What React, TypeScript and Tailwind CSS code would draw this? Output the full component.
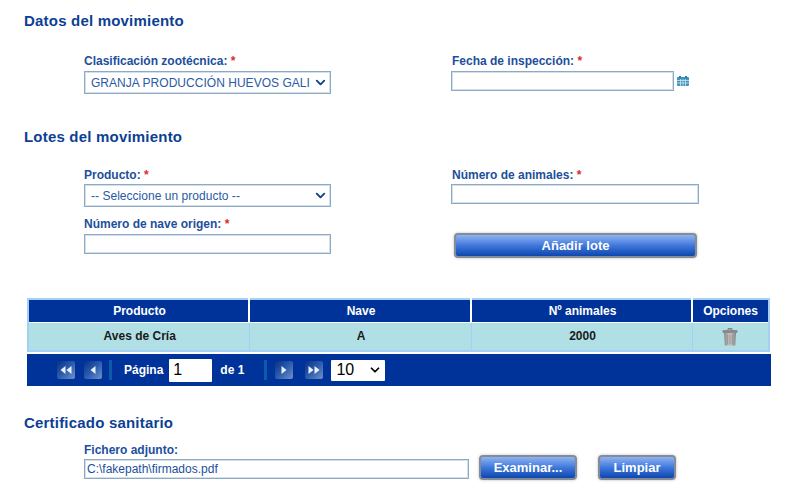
import React from "react";
import { ChevronDown } from "lucide-react";

const titleClass = "text-[15px] leading-[16px] font-bold tracking-[0.2px] text-[#0d3f94]";
const labelClass = "block text-[12px] leading-[14px] font-bold text-[#1c4f9c]";
const inputClass =
  "block h-[20px] border border-[#8ea9c4] shadow-[inset_0_0_0_1px_#d3dfe9] bg-white text-[12px] text-[#1c4f9c] px-1 outline-none";
const buttonClass =
  "rounded-[4px] border-2 border-[#838c98] bg-gradient-to-b from-[#8fb2f0] via-[#3f78dc] to-[#0c46ae] text-white font-bold text-[13px] shadow-[0_0_3px_#bbb]";

const Req = () => <span className="text-[#e0282e]"> *</span>;

const FakeSelect = ({ text }: { text: string }) => (
  <div className="flex h-[23px] w-[247px] items-center justify-between border border-[#8ea9c4] shadow-[inset_0_0_0_1px_#d3dfe9] bg-white pl-[6px] pr-[2px] text-[12px] tracking-[0.03px] text-[#2a5aa3]">
    <span className="whitespace-nowrap">{text}</span>
    <ChevronDown size={15} strokeWidth={3} className="shrink-0 text-[#123f8c]" />
  </div>
);

const CalendarIcon = () => (
  <svg width="12" height="10" viewBox="0 0 12 10" className="ml-[3px] mt-[5px]">
    <rect x="0" y="1" width="12" height="9" rx="1" fill="#3d93bd" />
    <rect x="2" y="0" width="2" height="2" fill="#2f7da3" />
    <rect x="8" y="0" width="2" height="2" fill="#2f7da3" />
    <path d="M0 4.5h12M0 7h12M3.5 3v7M6 3v7M8.5 3v7" stroke="#cfe6f2" strokeWidth="0.8" />
  </svg>
);

const TrashIcon = () => (
  <svg width="16" height="19" viewBox="0 0 16 19" className="mx-auto">
    <defs>
      <linearGradient id="can" x1="0" x2="1" y1="0" y2="0">
        <stop offset="0" stopColor="#8c8c8c" />
        <stop offset="0.5" stopColor="#c4c4c4" />
        <stop offset="1" stopColor="#858585" />
      </linearGradient>
    </defs>
    <path d="M6 1.5h4v1.5H6z" fill="none" stroke="#858585" strokeWidth="1" />
    <rect x="0.5" y="3" width="15" height="3" rx="1" fill="#8a8a8a" />
    <path d="M2 6h12l-.8 12.5H2.8z" fill="url(#can)" />
    <path d="M5.5 8v9M8 8v9M10.5 8v9" stroke="#999" strokeWidth="1" />
  </svg>
);

const PagerButton = ({ dir, double }: { dir: "left" | "right"; double?: boolean }) => {
  const tri = (x: number) =>
    dir === "left" ? `M${x + 5} 2 L${x} 6 L${x + 5} 10 Z` : `M${x} 2 L${x + 5} 6 L${x} 10 Z`;
  return (
    <div className="flex h-[18px] w-[18px] items-center justify-center rounded-[2px] bg-gradient-to-br from-[#0a2f86] via-[#2c5cae] to-[#6f92c8]">
      <svg width="12" height="12" viewBox="0 0 12 12">
        {double ? (
          <>
            <path d={tri(0.5)} fill="#e8f0fb" />
            <path d={tri(6.5)} fill="#e8f0fb" />
          </>
        ) : (
          <path d={tri(3.5)} fill="#e8f0fb" />
        )}
      </svg>
    </div>
  );
};

const Separator = () => <div className="h-[20px] w-[3px] bg-[#0c5aa8]" />;

export default function App() {
  return (
    <div className="h-[500px] w-[793px] overflow-hidden bg-white font-['Liberation_Sans',Arial,sans-serif]">
      <div className="pl-[24px] pt-[13px]">
        <h2 className={titleClass}>Datos del movimiento</h2>
      </div>

      <div className="mt-[25px] flex pl-[84px]">
        <div className="w-[367px]">
          <label className={labelClass}>
            Clasificación zootécnica:<Req />
          </label>
          <div className="mt-[3px]">
            <FakeSelect text="GRANJA PRODUCCIÓN HUEVOS GALI" />
          </div>
        </div>
        <div>
          <label className={`${labelClass} ml-px`}>
            Fecha de inspección:<Req />
          </label>
          <div className="mt-[3px] flex items-start">
            <input className={`${inputClass} w-[223px]`} readOnly />
            <CalendarIcon />
          </div>
        </div>
      </div>

      <div className="mt-[35px] pl-[24px]">
        <h2 className={titleClass}>Lotes del movimiento</h2>
      </div>

      <div className="mt-[23px] flex pl-[84px]">
        <div className="w-[367px]">
          <label className={labelClass}>
            Producto:<Req />
          </label>
          <div className="mt-[2px]">
            <FakeSelect text="-- Seleccione un producto --" />
          </div>
          <label className={`${labelClass} mt-[10px]`}>
            Número de nave origen:<Req />
          </label>
          <input className={`${inputClass} mt-[3px] w-[247px]`} readOnly />
        </div>
        <div>
          <label className={`${labelClass} ml-px`}>
            Número de animales:<Req />
          </label>
          <input className={`${inputClass} mt-[2px] w-[248px]`} readOnly />
          <button className={`${buttonClass} ml-[3px] mt-[29px] block h-[25px] w-[243px]`}>Añadir lote</button>
        </div>
      </div>

      <div className="ml-[27px] mt-[40px] w-[743px]">
        <table className="w-full table-fixed border-collapse border-2 border-[#a5d0f5] text-center text-[12px] font-bold">
          <colgroup>
            <col className="w-[221px]" />
            <col className="w-[222px]" />
            <col className="w-[221px]" />
            <col />
          </colgroup>
          <thead>
            <tr className="h-[23px] bg-[#003399] text-white">
              <th className="border-r-2 border-b border-white pl-[2px] font-bold">Producto</th>
              <th className="border-r-2 border-b border-white pl-[2px] font-bold">Nave</th>
              <th className="border-r-2 border-b border-white pl-[2px] font-bold">Nº animales</th>
              <th className="border-b border-white font-bold">Opciones</th>
            </tr>
          </thead>
          <tbody>
            <tr className="h-[29px] bg-[#b0e0e6] text-[#1a1a1a]">
              <td className="border-r border-[#a5d0f5] pl-[2px]">Aves de Cría</td>
              <td className="border-r border-[#a5d0f5] pl-[2px]">A</td>
              <td className="border-r border-[#a5d0f5] pl-[2px]">2000</td>
              <td>
                <TrashIcon />
              </td>
            </tr>
          </tbody>
        </table>
      </div>

      <div className="ml-[27px] mt-[2px] flex h-[32px] w-[744px] items-center bg-[#003399] pl-[30px] text-[12px] font-bold text-white">
        <PagerButton dir="left" double />
        <div className="ml-[9px]">
          <PagerButton dir="left" />
        </div>
        <div className="ml-[7px]">
          <Separator />
        </div>
        <span className="ml-[12px]">Página</span>
        <input
          className="ml-[6px] h-[23px] w-[43px] rounded-[1px] bg-white px-[4px] text-[16px] font-normal text-black outline-none"
          defaultValue="1"
        />
        <span className="ml-[8px]">de 1</span>
        <div className="ml-[20px]">
          <Separator />
        </div>
        <div className="ml-[8px]">
          <PagerButton dir="right" />
        </div>
        <div className="ml-[12px]">
          <PagerButton dir="right" double />
        </div>
        <div className="ml-[8px] flex h-[21px] w-[54px] items-center justify-between rounded-[1px] bg-white pl-[5px] pr-[3px] text-[16px] font-normal text-black">
          <span>10</span>
          <ChevronDown size={14} strokeWidth={3} />
        </div>
      </div>

      <div className="mt-[29px] pl-[24px]">
        <h2 className={titleClass}>Certificado sanitario</h2>
      </div>

      <div className="mt-[12px] pl-[84px]">
        <label className={labelClass}>Fichero adjunto:</label>
        <div className="flex items-start">
          <input
            className={`${inputClass} mt-[2px] w-[385px] !px-[2px]`}
            defaultValue="C:\fakepath\firmados.pdf"
          />
          <button className={`${buttonClass} ml-[10px] mt-[-2px] h-[25px] w-[98px]`}>Examinar...</button>
          <button className={`${buttonClass} ml-[21px] mt-[-2px] h-[25px] w-[78px]`}>Limpiar</button>
        </div>
      </div>
    </div>
  );
}
